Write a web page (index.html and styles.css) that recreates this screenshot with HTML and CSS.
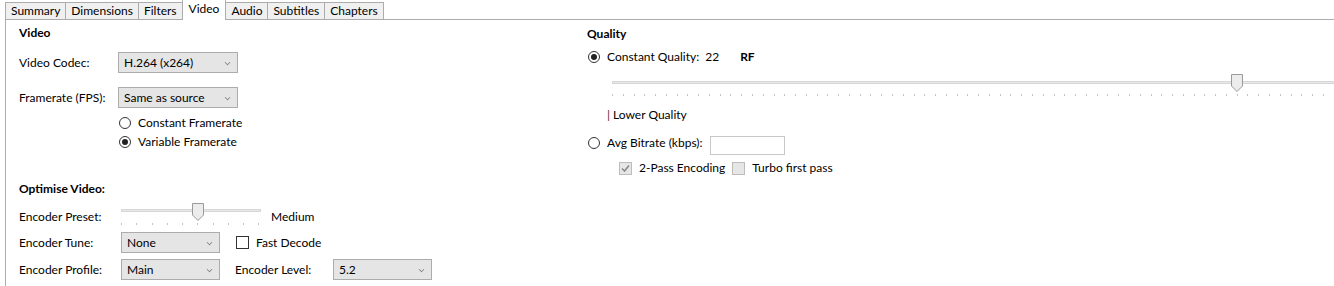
FILE: index.html
```html
<!DOCTYPE html>
<html>
    <head>
        <title>Video</title>
        <meta charset="utf-8">
        <link rel="stylesheet" href="styles.css">
    </head>
    <body>
        <div class="tabs">
            <span class="tab">Summary</span>
            <span class="tab">Dimensions</span>
            <span class="tab">Filters</span>
            <span class="tab active">Video</span>
            <span class="tab">Audio</span>
            <span class="tab">Subtitles</span>
            <span class="tab">Chapters</span>
        </div>
        <div class="panel">
            <div class="col-left">
                <h3 class="heading">Video</h3>
                <div class="row codec-row">
                    <span class="label top-label">Video Codec:</span>
                    <div class="select wide">H.264 (x264)<span class="chev"></span></div>
                </div>
                <div class="row fps-row">
                    <span class="label top-label">Framerate (FPS):</span>
                    <div class="select wide">Same as source<span class="chev"></span></div>
                </div>
                <div class="radios">
                    <label class="opt"><span class="radio"></span>Constant Framerate</label>
                    <label class="opt"><span class="radio checked"></span>Variable Framerate</label>
                </div>
                <h3 class="heading optimise">Optimise Video:</h3>
                <div class="row preset-row">
                    <span class="label enc-label">Encoder Preset:</span>
                    <div class="slider small">
                        <div class="track"></div>
                        <svg class="thumb" width="12" height="18" viewBox="0 0 12 18"><path d="M0.5 0.5 H11.5 V12 L6 17.5 L0.5 12 Z" fill="#ececec" stroke="#9a9a9a"/></svg>
                        <div class="ticks"></div>
                    </div>
                    <span class="slider-value">Medium</span>
                </div>
                <div class="row tune-row">
                    <span class="label enc-label">Encoder Tune:</span>
                    <div class="select narrow">None<span class="chev"></span></div>
                    <label class="opt check-opt"><span class="checkbox"></span>Fast Decode</label>
                </div>
                <div class="row profile-row">
                    <span class="label enc-label">Encoder Profile:</span>
                    <div class="select narrow">Main<span class="chev"></span></div>
                    <span class="label level-label">Encoder Level:</span>
                    <div class="select narrow">5.2<span class="chev"></span></div>
                </div>
            </div>
            <div class="col-right">
                <h3 class="heading">Quality</h3>
                <div class="row cq-row">
                    <label class="opt"><span class="radio checked"></span>Constant Quality:</label>
                    <span class="cq-value">22</span>
                    <span class="cq-unit">RF</span>
                </div>
                <div class="slider big">
                    <div class="track"></div>
                    <svg class="thumb" width="12" height="18" viewBox="0 0 12 18"><path d="M0.5 0.5 H11.5 V12 L6 17.5 L0.5 12 Z" fill="#ececec" stroke="#9a9a9a"/></svg>
                    <div class="ticks"></div>
                </div>
                <p class="hint"><span class="pipe">|</span> Lower Quality</p>
                <div class="row abr-row">
                    <label class="opt"><span class="radio"></span>Avg Bitrate (kbps):</label>
                    <div class="textbox"></div>
                </div>
                <div class="row pass-row">
                    <label class="opt disabled"><span class="checkbox off checked"><svg width="11" height="11" viewBox="0 0 11 11"><path d="M2 5.5 L4.5 8 L9 2.5" fill="none" stroke="#8a8a8a" stroke-width="1.6"/></svg></span>2-Pass Encoding</label>
                    <label class="opt disabled turbo"><span class="checkbox off"></span>Turbo first pass</label>
                </div>
            </div>
        </div>
    </body>
</html>
```

FILE: styles.css
```css
body {
    margin: 0;
    font-family: Lato, "Open Sans", sans-serif;
    font-size: 12px;
    line-height: 16px;
    color: #000;
    background: #fff;
    overflow: hidden;
}
h3, p {
    margin: 0;
}
.tabs {
    display: flex;
    align-items: flex-end;
    height: 19px;
    padding-left: 5px;
    position: relative;
    z-index: 1;
}
.tab {
    height: 16px;
    padding: 0 5px;
    line-height: 16px;
    background: #f0f0f0;
    border: 1px solid #acacac;
    border-bottom: none;
    margin-right: -1px;
}
.tab.active {
    height: 20px;
    line-height: 18px;
    margin-bottom: -1px;
    background: #fff;
    padding: 0 6px;
}
.panel {
    display: grid;
    grid-template-columns: 568px 1fr;
    margin-left: 5px;
    border-top: 1px solid #acacac;
    border-left: 1px solid #acacac;
    padding-left: 13px;
    height: 270px;
}
.heading {
    font-size: 12px;
    font-weight: bold;
    margin-top: 5px;
}
.row {
    display: flex;
    align-items: center;
}
.label {
    flex: none;
}
.top-label {
    width: 99px;
}
.enc-label {
    width: 102px;
}
.select {
    position: relative;
    height: 19px;
    line-height: 19px;
    padding-left: 5px;
    background: #e5e5e5;
    border: 1px solid #acacac;
    box-sizing: content-box;
}
.select.wide {
    width: 113px;
}
.select.narrow {
    width: 92px;
}
.chev {
    position: absolute;
    right: 7px;
    top: 7px;
    width: 4px;
    height: 4px;
    border-right: 1px solid #7a7a7a;
    border-bottom: 1px solid #7a7a7a;
    transform: rotate(45deg) scale(0.8);
}
.codec-row {
    margin-top: 11px;
}
.fps-row {
    margin-top: 14px;
}
.radios {
    margin-top: 7px;
    padding-left: 100px;
    display: grid;
    row-gap: 3px;
}
.opt {
    display: flex;
    align-items: center;
    gap: 7px;
}
.radio {
    width: 10px;
    height: 10px;
    border: 1px solid #333;
    border-radius: 50%;
    position: relative;
    flex: none;
}
.radio.checked::after {
    content: "";
    position: absolute;
    left: 2px;
    top: 2px;
    width: 6px;
    height: 6px;
    border-radius: 50%;
    background: #222;
}
.checkbox {
    width: 11px;
    height: 11px;
    border: 1px solid #333;
    background: #fff;
    flex: none;
    display: flex;
    align-items: center;
    justify-content: center;
}
.checkbox.off {
    background: #e6e6e6;
    border-color: #bcbcbc;
}
.optimise {
    margin-top: 31px;
}
.preset-row {
    margin-top: 6px;
    align-items: flex-start;
}
.preset-row .label,
.preset-row .slider-value {
    margin-top: 6px;
}
.slider {
    position: relative;
    flex: none;
}
.slider .track {
    position: absolute;
    left: 0;
    right: 0;
    height: 1px;
    background: #e7eaea;
    border: 1px solid #d6d6d6;
}
.slider .thumb {
    position: absolute;
    top: 0;
}
.slider .ticks {
    position: absolute;
    left: 0;
    right: 0;
    height: 2px;
    background: repeating-linear-gradient(to right, #c4c4c4 0 1px, transparent 1px var(--step));
}
.slider.small {
    width: 140px;
    height: 23px;
    --step: 15.25px;
}
.slider.small .track {
    top: 6px;
}
.slider.small .thumb {
    left: 71px;
}
.slider.small .ticks {
    top: 20px;
}
.slider-value {
    margin-left: 10px;
}
.tune-row {
    margin-top: 6px;
}
.tune-row .check-opt {
    margin-left: 16px;
}
.profile-row {
    margin-top: 6px;
}
.level-label {
    width: 98px;
    margin-left: 15px;
}
.col-right .heading {
    margin-top: 6px;
}
.cq-row {
    margin-top: 7px;
    padding-left: 1px;
}
.cq-value {
    margin-left: 6px;
}
.cq-unit {
    margin-left: 21px;
    font-weight: bold;
}
.slider.big {
    margin: 9px 0 0 25px;
    height: 24px;
    --step: 10.77px;
    overflow: hidden;
}
.slider.big .track {
    top: 7px;
    right: -20px;
}
.slider.big .thumb {
    left: 619px;
}
.slider.big .ticks {
    top: 20px;
}
.hint {
    margin: 9px 0 0 20px;
}
.pipe {
    color: #6b1e1e;
}
.abr-row {
    margin-top: 13px;
    padding-left: 1px;
    align-items: flex-start;
}
.abr-row .opt {
    margin-top: -1px;
}
.textbox {
    width: 73px;
    height: 17px;
    border: 1px solid #c8c8c8;
    margin-left: 7px;
    margin-top: 0;
}
.pass-row {
    margin-top: 5px;
    padding-left: 32px;
}
.turbo {
    margin-left: 7px;
}
```
